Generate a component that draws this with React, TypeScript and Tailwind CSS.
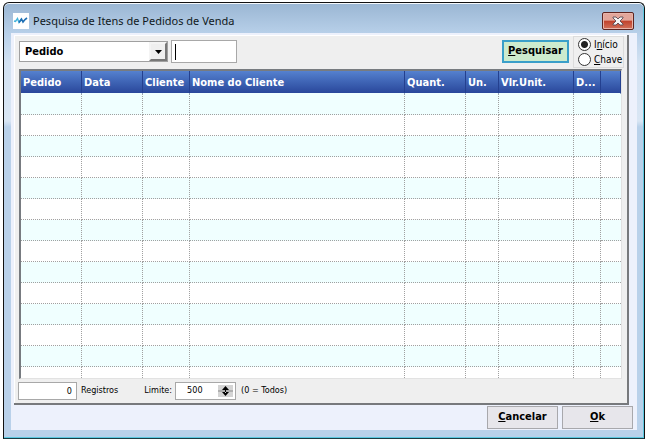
import type { ReactNode } from "react";

const columns = [
  { label: "Pedido", width: "w-[61px]" },
  { label: "Data", width: "w-[61px]" },
  { label: "Cliente", width: "w-[47px]" },
  { label: "Nome do Cliente", width: "" },
  { label: "Quant.", width: "w-[61px]" },
  { label: "Un.", width: "w-[33px]" },
  { label: "Vlr.Unit.", width: "w-[75px]" },
  { label: "D...", width: "w-[27px]" },
  { label: "", width: "w-[20px]" },
];

const rows = Array.from({ length: 14 }, (_, i) => i);

const bold = "font-['DejaVu_Sans_Condensed','Noto_Sans',sans-serif] text-[11px] font-bold";

function TitleBar() {
  return (
    <header className="flex h-[29px] shrink-0 items-center gap-1 px-2 pt-[5px]">
      <svg className="h-4 w-4 bg-white" viewBox="0 0 16 16" fill="none" aria-hidden="true">
        <path d="M1 8 L2.5 8.5 L4.5 5.5 L6 9.5 L8.5 6" stroke="#45b4dc" strokeWidth="1.4" />
        <path d="M6 9.5 L8.5 6 L10 9 L12 6.5 L14 5" stroke="#1f6fb4" strokeWidth="1.6" />
      </svg>
      <h1 className="flex-1 whitespace-nowrap font-['Noto_Sans',sans-serif] text-[11px] leading-4 text-[#101820]">
        Pesquisa de Itens de Pedidos de Venda
      </h1>
      <button
        type="button"
        aria-label="Fechar"
        className="flex h-[18px] w-8 items-center justify-center rounded-[2px] border border-[#5e2420] bg-linear-to-b from-[#e3a69b] from-45% via-[#c0412c] via-50% to-[#d2705a] shadow-[inset_0_0_0_1px_#e8b4aa]"
      >
        <svg className="h-[10px] w-3" viewBox="0 0 12 10" aria-hidden="true">
          <path
            d="M1 1 H4 L6 3 L8 1 H11 V2 L8 5 L11 8 V9 H8 L6 7 L4 9 H1 V8 L4 5 L1 2 Z"
            fill="#f6f6f6"
            stroke="#5b4a52"
            strokeWidth="0.9"
          />
        </svg>
      </button>
    </header>
  );
}

function SearchBar() {
  return (
    <div className="flex h-[33px] shrink-0 items-start justify-between pl-[5px] pr-[3px]">
      <div className="flex items-center gap-[3px] pt-[5px]">
        <div className="relative flex h-[21px] w-[149px] border border-[#a0a0a0] bg-white">
          <select
            aria-label="Campo"
            className={`${bold} w-full appearance-none bg-transparent pl-[5px] pt-[2px] text-black outline-none`}
          >
            <option>Pedido</option>
          </select>
          <span className="pointer-events-none absolute inset-y-0 right-0 flex w-[18px] items-center justify-center border-2 border-t-[#f4f4f4] border-l-[#f4f4f4] border-r-[#777777] border-b-[#777777] bg-[#efefef]">
            <svg className="h-1 w-[7px]" viewBox="0 0 7 4" aria-hidden="true">
              <path d="M0 0 H7 L3.5 4 Z" fill="#000" />
            </svg>
          </span>
        </div>
        <div className="relative flex h-[23px] w-[66px] items-center border border-[#a8a8a8] bg-white">
          <input aria-label="Texto da pesquisa" className={`${bold} w-full bg-transparent px-1 outline-none`} />
          <span className="absolute left-[3px] h-4 w-px bg-black" />
        </div>
      </div>
      <div className="flex items-start gap-1">
        <button
          type="button"
          className={`${bold} mt-[5px] h-[23px] w-[67px] border-2 border-[#3a9fc9] bg-[#cdebce] text-black`}
        >
          <u>P</u>esquisar
        </button>
        <fieldset className="mt-px flex h-8 w-[51px] flex-col border border-[#dcdcdc] pl-1">
          <RadioOption checked>
            I<u>n</u>ício
          </RadioOption>
          <RadioOption>
            <u>C</u>have
          </RadioOption>
        </fieldset>
      </div>
    </div>
  );
}

function RadioOption({ checked, children }: { checked?: boolean; children: ReactNode }) {
  return (
    <label className="flex h-[15px] items-center gap-[3px] font-['DejaVu_Sans_Condensed','Noto_Sans',sans-serif] text-[10px] text-black">
      <input
        type="radio"
        name="modo"
        defaultChecked={checked}
        className="h-[13px] w-[13px] shrink-0 appearance-none rounded-full border border-[#333333] bg-white checked:bg-[radial-gradient(circle,#222222_0_3px,#ffffff_4px)]"
      />
      <span>{children}</span>
    </label>
  );
}

function ItemsTable() {
  return (
    <div className="mx-[5px] mt-px min-h-0 flex-1 overflow-hidden border-b border-r border-l-2 border-t-2 border-b-[#e2e2e2] border-r-[#e2e2e2] border-l-[#777b80] border-t-[#777b80] bg-white">
      <table className="w-full table-fixed border-separate border-spacing-0">
        <thead>
          <tr className={`${bold} text-left text-white`}>
            {columns.map((column, i) => (
              <th
                key={i}
                scope="col"
                className={`${column.width} h-[23px] whitespace-nowrap border-b border-r border-b-[#f0ffff] border-r-[#24408f] bg-linear-to-b from-[#5581cf] to-[#2a479b] bg-clip-padding p-0 pl-[2px] pt-[2px]`}
              >
                {column.label}
              </th>
            ))}
          </tr>
        </thead>
        <tbody>
          {rows.map((row) => (
            <tr key={row} className="odd:bg-[#f0ffff] even:bg-white">
              {columns.map((_, i) => (
                <td
                  key={i}
                  className="h-[21px] border-b border-r border-dotted border-[#a0a0a0] p-0 last:border-r-0"
                />
              ))}
            </tr>
          ))}
        </tbody>
      </table>
    </div>
  );
}

function StatusBar() {
  return (
    <div className="flex h-6 shrink-0 items-center pl-1 font-['DejaVu_Sans_Condensed','Noto_Sans',sans-serif] text-[9px] text-black">
      <label className="flex items-center gap-1">
        <input
          readOnly
          defaultValue="0"
          className="h-[18px] w-[59px] border border-[#a8a8a8] bg-white pr-1 text-right outline-none"
        />
        Registros
      </label>
      <label className="ml-[26px] flex items-center gap-[3px]">
        Limite:
        <span className="flex h-[18px] w-[61px] items-center border border-[#a8a8a8] bg-white pr-[2px]">
          <input defaultValue="500" className="w-full min-w-0 bg-transparent pl-[11px] outline-none" />
          <svg className="h-3 w-[15px] shrink-0" viewBox="0 0 15 12" aria-hidden="true">
            <path d="M0 0 H15 V12 H0 Z" fill="#d4d4d4" />
            <path d="M0 6 H15" stroke="#8a8a8a" />
            <path d="M7.5 1 L11 5 H4 Z M7.5 11 L11 7 H4 Z M7 4 H8 V8 H7 Z" fill="#000" />
          </svg>
        </span>
      </label>
      <span className="ml-[5px]">(0 = Todos)</span>
    </div>
  );
}

function FooterButton({ children }: { children: ReactNode }) {
  return (
    <button type="button" className={`${bold} h-[23px] w-[71px] border border-[#a8a8ac] bg-[#e7e6eb] text-black`}>
      {children}
    </button>
  );
}

export default function App() {
  return (
    <main className="flex h-screen bg-white pb-[2px] pl-[3px] pr-[1px] pt-[2px]">
      <div className="flex min-w-0 flex-1 flex-col rounded-t-[6px] border border-[#111111] border-b-[#1c3c44] bg-[linear-gradient(#9ab6d3_0,#b9d1ea_32px,#d3e2f2_60px,#d9e6f4_118px,#b9d1ea_124px)] px-[7px] pb-2 shadow-[inset_0_1px_0_#f4f8fc,inset_-1px_-1px_0_#5cc8e0]">
        <div className="-mx-[7px] mt-[1px] pr-[2px] pl-[1px]">
          <TitleBar />
        </div>
        <div className="flex min-h-0 flex-1 flex-col bg-[#edf1fc] pl-[3px] pt-[2px]">
          <section className="mr-2 flex min-h-0 flex-1 flex-col border-b-2 border-r-2 border-[#77797c] bg-[#efefef] shadow-[inset_1px_1px_0_#ffffff]">
            <SearchBar />
            <ItemsTable />
            <StatusBar />
          </section>
          <footer className="flex h-[25px] shrink-0 items-start justify-end gap-1 pr-1 pt-[1px]">
            <FooterButton>
              <u>C</u>ancelar
            </FooterButton>
            <FooterButton>
              <u>O</u>k
            </FooterButton>
          </footer>
        </div>
      </div>
    </main>
  );
}
